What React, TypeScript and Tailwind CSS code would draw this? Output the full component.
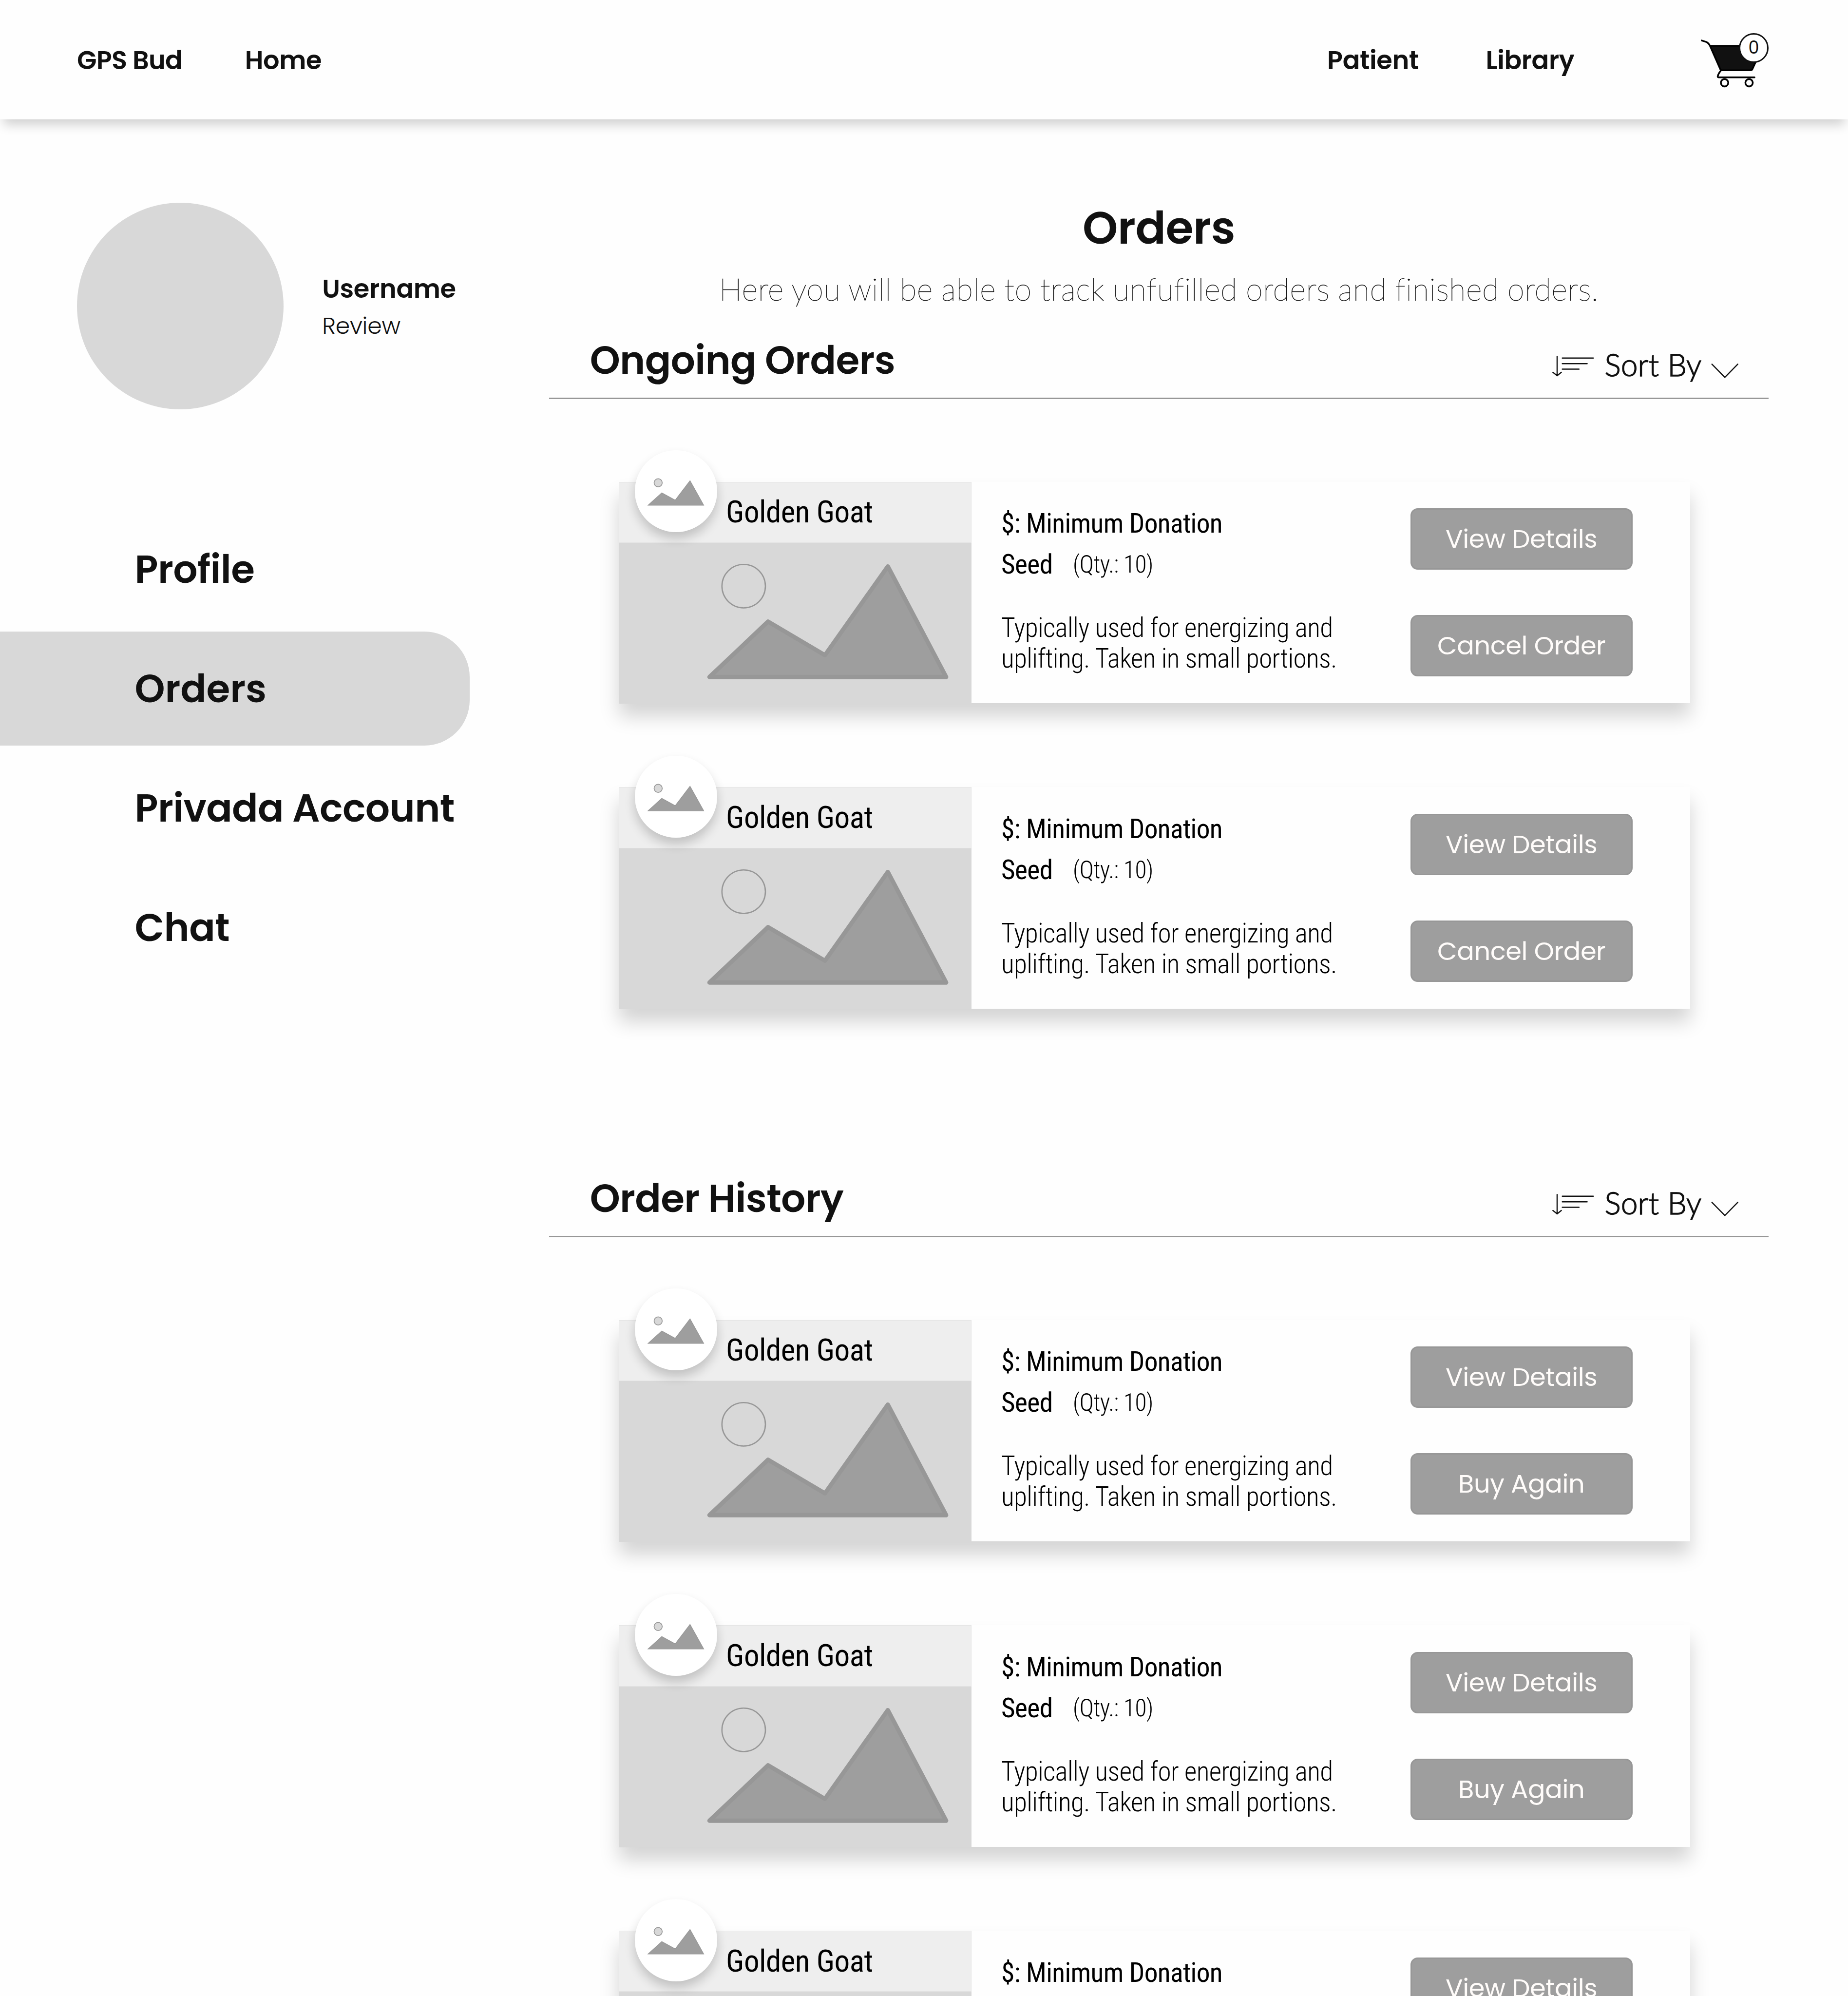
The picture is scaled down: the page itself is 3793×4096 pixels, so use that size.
type Order = { name: string; price: string; kind: string; qty: number; action: string };

const base = { name: "Golden Goat", price: "$: Minimum Donation", kind: "Seed", qty: 10 };
const ongoing: Order[] = [
  { ...base, action: "Cancel Order" },
  { ...base, action: "Cancel Order" },
];
const history: Order[] = [
  { ...base, action: "Buy Again" },
  { ...base, action: "Buy Again" },
  { ...base, action: "Buy Again" },
];

function Cart() {
  return (
    <div className="relative mt-[60px] h-[160px] w-[190px] shrink-0">
      <svg className="h-[160px] w-[190px]" viewBox="0 0 570 480" fill="none" stroke="#000" strokeWidth="12" strokeLinecap="round" strokeLinejoin="round">
        <path d="M112 140H484L409 304Q405 312 396 312H196Q187 312 184 304Z" fill="#111" />
        <path d="M54 103L86 113Q100 118 112 140" />
        <path d="M188 314Q170 336 166 354Q165 361 172 361H424" />
        <circle cx="214" cy="399" r="26" />
        <circle cx="386" cy="399" r="26" />
      </svg>
      <span className="absolute left-[105px] top-[18px] flex h-[69px] w-[69px] items-center justify-center rounded-full border-[4px] border-[#111] bg-white pb-[3px] text-[40px] font-normal leading-none tracking-normal text-[#111]">
        0
      </span>
    </div>
  );
}

function SortBy() {
  return (
    <div className="flex items-start text-[#111]">
      <svg className="mt-[33px] h-[55px] w-[100px]" viewBox="51 147 300 165" fill="none" stroke="currentColor" strokeWidth="8.5" strokeLinecap="round">
        <path d="M88.500 158V292M59 270L88.500 294L118 270" strokeLinejoin="round" />
        <path d="M125 170H342M125 209H299M125 248H242" />
      </svg>
      <span className="ml-[24px] mt-[21px] w-[249px] whitespace-nowrap font-['Lato',sans-serif] text-[71px] font-light leading-none tracking-[0.2px] [-webkit-text-stroke:1.6px_#111]">Sort By</span>
      <svg className="mt-[52px] h-[36px] w-[64px]" viewBox="1170 206 192 108" fill="none" stroke="currentColor" strokeWidth="8.5" strokeLinecap="round">
        <path d="M1176 214L1266.500 306L1357 214" />
      </svg>
    </div>
  );
}

function Button({ label }: { label: string }) {
  return (
    <button className="flex h-[143.5px] w-[519px] items-center justify-center rounded-[17px] border-[3.5px] border-[#979797] bg-[#9e9e9e] pt-px text-[60px] leading-none tracking-[-0.5px] text-[#fffcfa]">
      {label}
    </button>
  );
}

function OrderCard({ order }: { order: Order }) {
  return (
    <article className="relative flex h-[518px] w-[2505.5px] bg-[#fefefe] shadow-[0_32px_42px_rgba(0,0,0,0.17)]">
      <div className="w-[825px] shrink-0">
        <div className="h-[142.5px] border border-[#e4e4e4] bg-[#eee] pl-[250px] pt-[34px] font-['Roboto_Condensed','Roboto',sans-serif] text-[72px] leading-none tracking-[-0.65px] text-black">
          {order.name}
        </div>
        <svg className="block h-[376.5px] w-[825px] bg-[#d8d8d8]" viewBox="0 142.500 825 376.500">
          <circle cx="292" cy="243.700" r="50.800" fill="none" stroke="#979797" strokeWidth="3" />
          <path d="M212 456L349 326.500L482 405L629 197.500L765.400 456Z" fill="#9e9e9e" stroke="#979797" strokeWidth="10" strokeLinejoin="round" />
        </svg>
      </div>
      <div className="absolute left-[38px] top-[-74px] h-[192px] w-[192px] rounded-full bg-white shadow-[0_15px_24px_rgba(0,0,0,0.19)]">
        <svg className="h-full w-full" viewBox="0 0 192 192" stroke="#979797">
          <circle cx="54.500" cy="76" r="9.500" fill="#d8d8d8" strokeWidth="2" />
          <path d="M31 128.500L63 99.500L94.400 116.500L129 71L161 128.500Z" fill="#9e9e9e" strokeWidth="1.500" />
        </svg>
      </div>
      <div className="w-[1026px] shrink-0 pl-[69.5px] pt-[66.5px] font-['Roboto_Condensed','Roboto',sans-serif] text-[63px] leading-none tracking-[-0.7px] text-black">
        <h3>{order.price}</h3>
        <div className="mt-[33px] flex">
          <span className="w-[167.5px]">{order.kind}</span>
          <span className="pt-[3px] text-[56px] font-light">(Qty.: {order.qty})</span>
        </div>
        <p className="mt-[80px] whitespace-nowrap font-light leading-[72px]">
          Typically used for energizing and
          <br />
          uplifting. Taken in small portions.
        </p>
      </div>
      <div className="flex flex-col gap-[105.5px] pt-[62px]">
        <Button label="View Details" />
        <Button label={order.action} />
      </div>
    </article>
  );
}

function Section({ title, orders }: { title: string; orders: Order[] }) {
  return (
    <section>
      <div className="flex h-[137px] items-start justify-between border-b-[3.5px] border-[#979797] pl-[95px] pr-[70px]">
        <h2 className="mt-px whitespace-nowrap text-[90px] font-semibold leading-none tracking-[-0.8px]">{title}</h2>
        <SortBy />
      </div>
      <div className="ml-[162px] mt-[193px] flex flex-col gap-[196px]">
        {orders.map((o, i) => (
          <OrderCard key={i} order={o} />
        ))}
      </div>
    </section>
  );
}

const links = ["Profile", "Orders", "Privada Account", "Chat"];

export default function App() {
  return (
    <div className="h-[4665px] w-[4320px] overflow-hidden bg-[#fefefe] font-['Poppins','Inter',sans-serif] text-[#111] [zoom:0.87802]">
      <header className="relative flex h-[279px] items-start bg-[#fefefe] pl-[180px] pr-[170px] text-[60px] font-semibold leading-none tracking-[-0.45px] shadow-[0_20px_24px_-8px_rgba(0,0,0,0.18)]">
        <a className="mt-[112px] w-[392.5px] tracking-[-0.9px]">GPS Bud</a>
        <a className="mt-[112px]">Home</a>
        <a className="ml-auto mt-[112px] w-[370.5px]">Patient</a>
        <a className="mt-[112px] w-[487px]">Library</a>
        <Cart />
      </header>
      <div className="flex items-start">
        <aside className="w-[1284px] shrink-0 pt-[195px]">
          <div className="flex pl-[180px]">
            <div className="h-[483px] w-[483px] shrink-0 rounded-full bg-[#d8d8d8]" />
            <div className="ml-[90px] pt-[172px] leading-none">
              <div className="text-[60px] font-semibold tracking-[-0.4px]">Username</div>
              <div className="mt-[28.5px] text-[54px] font-light tracking-[-0.3px]">Review</div>
            </div>
          </div>
          <nav className="mt-[240px] flex flex-col gap-[12px]">
            {links.map((l) => (
              <a
                key={l}
                className={`flex h-[267px] w-[1098px] items-center whitespace-nowrap rounded-r-[106px] pl-[315px] text-[90px] font-semibold leading-none ${l === "Orders" ? "bg-[#d8d8d8] tracking-[-0.2px]" : "tracking-[-0.75px]"}`}
              >
                {l}
              </a>
            ))}
          </nav>
        </aside>
        <main className="w-[2850px] shrink-0 pt-[201.5px]">
          <h1 className="text-center text-[105px] font-semibold leading-none tracking-[-0.6px]">Orders</h1>
          <p className="mt-[53.5px] text-center font-['Lato',sans-serif] text-[72px] font-thin leading-none tracking-[0.56px] [word-spacing:-1.5px] [-webkit-text-stroke:0.8px_#111] [font-variant-ligatures:none]">
            Here you will be able to track unfufilled orders and finished orders.
          </p>
          <div className="mt-[85px] flex flex-col gap-[397px]">
            <Section title="Ongoing Orders" orders={ongoing} />
            <Section title="Order History" orders={history} />
          </div>
        </main>
      </div>
    </div>
  );
}
